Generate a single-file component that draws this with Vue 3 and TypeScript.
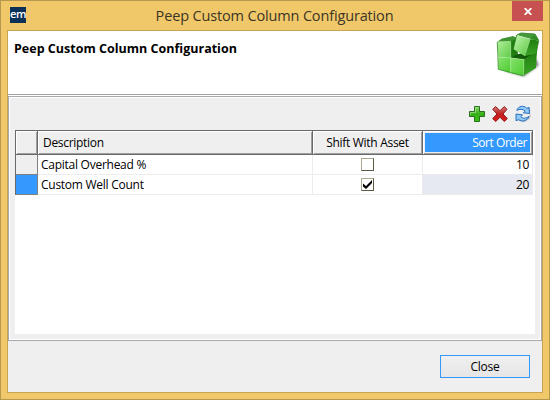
<script setup lang="ts">
import { ref } from 'vue'

interface Column {
  name: string
  shift: boolean
  order: number
}

const rows = ref<Column[]>([
  { name: 'Capital Overhead %', shift: false, order: 10 },
  { name: 'Custom Well Count', shift: true, order: 20 },
])
const selected = ref(1)
</script>

<template>
  <div class="window">
    <header class="titlebar">
      <div class="logo">em</div>
      <div class="title"><span>Peep Custom Column Configuration</span></div>
      <button class="exit" aria-label="Close window">
        <svg width="8" height="7" viewBox="0 0 8 7"><path d="M.7.2l6.600 6.600M7.300.2L.7 6.800" stroke="#fff" stroke-width="1.9" /></svg>
      </button>
    </header>
    <main class="client">
      <section class="banner">
        <h1>Peep Custom Column Configuration</h1>
        <svg class="cubes" width="46" height="46" viewBox="0 0 46 46">
          <defs>
            <linearGradient id="front" x1="0" y1="0" x2="1" y2="1"><stop offset="0" stop-color="#b0ee9c" /><stop offset="1" stop-color="#5ecb45" /></linearGradient>
            <linearGradient id="lower" x1="0" y1="0" x2="1" y2="1"><stop offset="0" stop-color="#86e26e" /><stop offset="1" stop-color="#4ccb2e" /></linearGradient>
            <linearGradient id="side" x1="0" y1="0" x2="0" y2="1"><stop offset="0" stop-color="#1f7d10" /><stop offset="1" stop-color="#3aa524" /></linearGradient>
            <linearGradient id="face" x1="0" y1="0" x2="1" y2="1"><stop offset="0" stop-color="#c6f5b6" /><stop offset="1" stop-color="#55c93b" /></linearGradient>
            <filter id="soft" x="-30%" y="-30%" width="160%" height="160%"><feGaussianBlur stdDeviation="1.2" /></filter>
          </defs>
          <path d="M8 39l20 5.500L43 33l-3-6-12 12z" fill="#555" opacity=".7" filter="url(#soft)" />
          <path d="M1.300 9.700L6 6.500 17 4l4 2-6.300 3.500z" fill="#3f9431" />
          <path d="M1.300 9.700l13.400-.5V26L2.300 25z" fill="url(#front)" />
          <path d="M14.700 9.200L20.500 6 22 23.500 14.700 26z" fill="#1f7d12" />
          <path d="M14.700 26l6-3.500L31 20l10 3-13 4.500z" fill="#125c0a" />
          <path d="M2.300 25l12.400 1v15L2.300 37.300z" fill="url(#lower)" />
          <path d="M14.700 26L28 27.500l-.7 16.300-12.600-2.900z" fill="url(#lower)" />
          <path d="M28 27.500l13-8.500-1 17-12.700 7.800z" fill="url(#side)" />
          <path d="M1.300 9.700l1 27.600 25 6.500" fill="none" stroke="#319123" stroke-width=".8" />
          <path d="M2.300 25l12.400 1L28 27.500M14.700 9.500v31.400M28 27.500l-.7 16" fill="none" stroke="#b3efa3" stroke-width=".7" opacity=".7" />
          <path d="M20.700 3L25 1l14 1 3.700 6L35 7z" fill="#45993a" />
          <path d="M20.700 3L34 7.300 28.600 24 17.300 17z" fill="url(#face)" />
          <path d="M34 7.300L42.700 8.500 40.200 21.500 28.600 24z" fill="url(#side)" />
          <path d="M34 7.300L38 3 42.700 8.500z" fill="#318e23" />
          <path d="M17.300 17L20.700 3 25 1l14 1 3.700 6.500-2.500 13" fill="none" stroke="#277d1b" stroke-width=".8" />
          <path d="M28.600 24L34 7.300" fill="none" stroke="#99de89" stroke-width=".7" />
        </svg>
      </section>
      <section class="panel">
        <nav class="tools">
          <svg width="18" height="18" viewBox="0 0 18 18">
            <defs><linearGradient id="plus" x1="0" y1="0" x2="0" y2="1"><stop offset="0" stop-color="#8cdc6e" /><stop offset=".5" stop-color="#35ae18" /><stop offset="1" stop-color="#38c313" /></linearGradient></defs>
            <path d="M6.500 1.500h5v5h5v5h-5v5h-5v-5h-5v-5h5z" fill="url(#plus)" stroke="#286e1c" stroke-linejoin="round" />
            <path d="M7.500 7.500V2.500h3M2.500 10V7.500h5" fill="none" stroke="#a5e58c" opacity=".7" />
          </svg>
          <svg width="18" height="18" viewBox="0 0 18 18">
            <defs><linearGradient id="cross" x1="0" y1="0" x2="0" y2="1"><stop offset="0" stop-color="#dc7777" /><stop offset=".5" stop-color="#bd2020" /><stop offset="1" stop-color="#e51818" /></linearGradient></defs>
            <path d="M4.500 1.500L9 5.700l4.200-4.200 2.800 2.800L12 9l4.300 4.600-2.900 2.900L9 12.300l-4.300 4.200-3-2.900L6 9 1.700 4.300z" fill="url(#cross)" stroke="#8c1c1c" stroke-linejoin="round" />
          </svg>
          <svg width="16" height="18" viewBox="0 0 16 18">
            <path d="M4 15l5 1.500 5-3 1.500-4M14.500 3v6" fill="none" stroke="#777" stroke-width="1.500" opacity=".35" />
            <path d="M1.800 5.500C3.200 1 8.500-.2 11.800 3.300L14 2.300l.5 6.200-6.200-.7 1.800-1.700C7.500 3.800 4.500 4 1.800 5.500z" fill="#91c9f8" stroke="#2a70bd" stroke-linejoin="round" />
            <path d="M14 11.500c-1.700 4.500-7 5.700-10.300 3.200L1 15.700V9l6.500.8-1.700 2c2.400 2.200 5.400 1.500 8.200-.3z" fill="#91c9f8" stroke="#2a70bd" stroke-linejoin="round" />
          </svg>
        </nav>
        <div class="grid">
          <div class="row head">
            <div class="cell"></div>
            <div class="cell"><span>Description</span></div>
            <div class="cell center"><span>Shift With Asset</span></div>
            <div class="cell sorted"><span>Sort Order</span></div>
          </div>
          <div v-for="(row, i) in rows" :key="row.name" class="row" :class="{ active: i === selected }">
            <div class="cell marker"></div>
            <div class="cell name"><span>{{ row.name }}</span></div>
            <div class="cell center">
              <button class="check" role="checkbox" :aria-checked="row.shift" @click="row.shift = !row.shift">
                <svg v-if="row.shift" width="11" height="11" viewBox="0 0 11 11"><path d="M1 4.500v3L4 10l6-6V1L4 7z" fill="#000" /></svg>
              </button>
            </div>
            <div class="cell order" @click="selected = i"><span>{{ row.order }}</span></div>
          </div>
        </div>
      </section>
      <footer class="footer"><button class="close"><span>Close</span></button></footer>
    </main>
  </div>
</template>

<style>
body { margin: 0; overflow: hidden; }
</style>

<style scoped>
* { box-sizing: border-box; }
.window { width: 550px; height: 400px; background: #f0c869; border: 1px solid #b6984f; padding: 0 6px; font: 12px/16px "Open Sans", "Noto Sans", sans-serif; letter-spacing: -.3px; color: #000; }
button { font: inherit; letter-spacing: inherit; padding: 0; border: 0; border-radius: 0; }
span { white-space: nowrap; }
.titlebar { height: 29px; display: flex; align-items: flex-start; }
.logo { width: 16px; height: 16px; margin: 6px 0 0 3px; background: #0b3157; color: #fff; font-size: 11px; font-weight: 600; line-height: 14px; letter-spacing: -.5px; text-align: center; }
.title { flex: 1; text-align: center; padding: 6px 0 0 11px; font-size: 14.5px; line-height: 18px; letter-spacing: -.15px; color: #3b3525; }
.exit { width: 31px; height: 20px; background: #c75050; display: flex; align-items: center; justify-content: center; }
.client { width: 536px; height: 363px; border: 1px solid #c6a453; background: #efefef; display: flex; flex-direction: column; }
.banner { height: 65px; background: #fff; border-bottom: 1px solid #fff; box-shadow: inset 0 -1px #a0a0a5; display: flex; justify-content: space-between; padding: 0 0 0 6px; }
h1 { margin: 10px 0 0; font-size: 12.5px; line-height: 16px; font-weight: 700; letter-spacing: .01px; white-space: nowrap; }
.cubes { margin-top: 1px; }
.panel { height: 245px; border: 1px solid #a8a8ae; box-shadow: inset 0 0 0 1px #fff; padding: 8px 6px 6px; }
.tools { height: 25px; display: flex; justify-content: flex-end; gap: 5px; padding-right: 4px; }
.tools svg:last-child { margin-left: 1px; }
.grid { height: 204px; background: #fff; }
.row { width: 518px; height: 20px; display: grid; grid-template-columns: 23px 275px 110px 110px; }
.head { height: 25px; border-top: 1px solid #696969; }
.cell { display: flex; align-items: center; border-right: 1px solid #ececec; border-bottom: 1px solid #ececec; }
.head .cell { background: #efefef; border-right-color: #696969; border-bottom-color: #696969; padding-left: 5px; box-shadow: inset 1px 1px #fff, inset -1px -1px #a0a0a0; }
.head .cell:first-child { border-left: 1px solid #696969; }
.cell.center { justify-content: center; }
.head .cell.center { padding-left: 0; }
.head .cell.sorted { background: #3399ff; color: #fff; justify-content: flex-end; padding-right: 5px; letter-spacing: -.45px; box-shadow: inset 1px 1px #fff, inset -1px -1px #a0a0a0, inset 0 0 0 2px #efefef; }
.cell.marker { background: #efefef; border-left: 1px solid #696969; border-right-color: #808080; border-bottom-color: #808080; }
.active .cell.marker { background: #3399ff; }
.name { padding-left: 3px; letter-spacing: -.26px; }
.order { justify-content: flex-end; padding-right: 3px; }
.active .order { background: #e6e9f1; }
.check { width: 13px; height: 13px; border: 1px solid #5d5944; border-top-color: #aca890; border-left-color: #aca890; background: #fff; display: flex; }
.footer { flex: 1; display: flex; justify-content: flex-end; align-items: flex-start; padding: 14px 12px 0 0; }
.close { width: 90px; height: 23px; border: 1px solid #3399ff; background: linear-gradient(#f0f0f0, #e5e5e5); color: #000; }
</style>
